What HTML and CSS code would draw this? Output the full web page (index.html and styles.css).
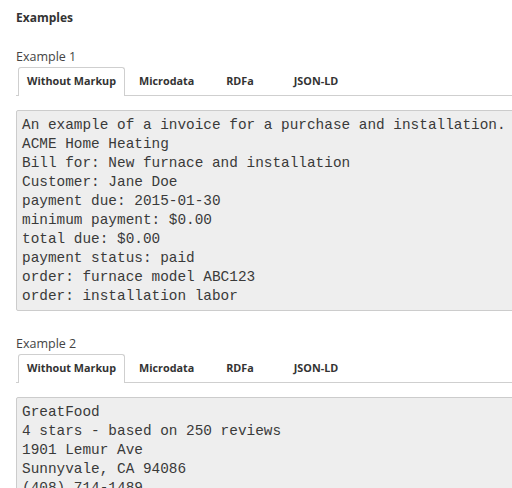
FILE: index.html
```html
<!DOCTYPE html>
<html lang="en">
<head>
<meta charset="utf-8">
<title>Examples</title>
<link rel="stylesheet" href="styles.css">
</head>
<body>
<div class="page">
  <h2 class="title">Examples</h2>

  <section class="example">
    <div class="label">Example 1</div>
    <ul class="tabs">
      <li class="tab active">Without Markup</li>
      <li class="tab t2">Microdata</li>
      <li class="tab t3">RDFa</li>
      <li class="tab t4">JSON-LD</li>
    </ul>
    <pre class="code">An example of a invoice for a purchase and installation.
ACME Home Heating
Bill for: New furnace and installation
Customer: Jane Doe
payment due: 2015-01-30
minimum payment: $0.00
total due: $0.00
payment status: paid
order: furnace model ABC123
order: installation labor</pre>
  </section>

  <section class="example">
    <div class="label">Example 2</div>
    <ul class="tabs">
      <li class="tab active">Without Markup</li>
      <li class="tab t2">Microdata</li>
      <li class="tab t3">RDFa</li>
      <li class="tab t4">JSON-LD</li>
    </ul>
    <pre class="code">GreatFood
4 stars - based on 250 reviews
1901 Lemur Ave
Sunnyvale, CA 94086
(408) 714-1489
greatfood.com
Hours: Mon-Sat 11:00-14:30 and 17:00-21:30
Categories: Middle Eastern, Mediterranean
Price Range: $$
Takes Reservations: Yes</pre>
  </section>
</div>
</body>
</html>
```

FILE: styles.css
```css
html, body {
  margin: 0;
  padding: 0;
  overflow: hidden;
  background: #fff;
}

body {
  font-family: "Open Sans", "Noto Sans", sans-serif;
  color: #333;
}

.page {
  padding: 9px 0 0 16px;
  width: 540px;
}

.title {
  margin: 0 0 21px;
  font-size: 12px;
  line-height: 18px;
  font-weight: 700;
  color: #333;
}

.example {
  margin-bottom: 24px;
}

.label {
  font-size: 12.5px;
  line-height: 18px;
  color: #444;
  margin-bottom: 1px;
}

.tabs {
  list-style: none;
  margin: 0 0 14px;
  padding: 0;
  display: flex;
  border-bottom: 1px solid #cfcfcf;
  height: 28px;
}

.tab {
  font-size: 10.8px;
  font-weight: 700;
  line-height: 26px;
  color: #333;
  padding: 0 8px;
  border: 1px solid transparent;
  border-bottom: none;
  border-radius: 3px 3px 0 0;
}

.tab.active {
  margin-left: 2px;
  border-color: #cfcfcf;
  background: #fff;
  height: 28px;
}

.tab.t2 { margin-left: 5px; }
.tab.t3 { margin-left: 14px; }
.tab.t4 { margin-left: 22px; }

.code {
  margin: 0;
  padding: 4.5px 5px;
  background: #eee;
  border: 1px solid #ccc;
  border-radius: 2px;
  font-family: "Liberation Mono", "Courier New", monospace;
  font-size: 14.4px;
  line-height: 19px;
  color: #3a3a3a;
  white-space: pre;
  overflow: hidden;
}
```
